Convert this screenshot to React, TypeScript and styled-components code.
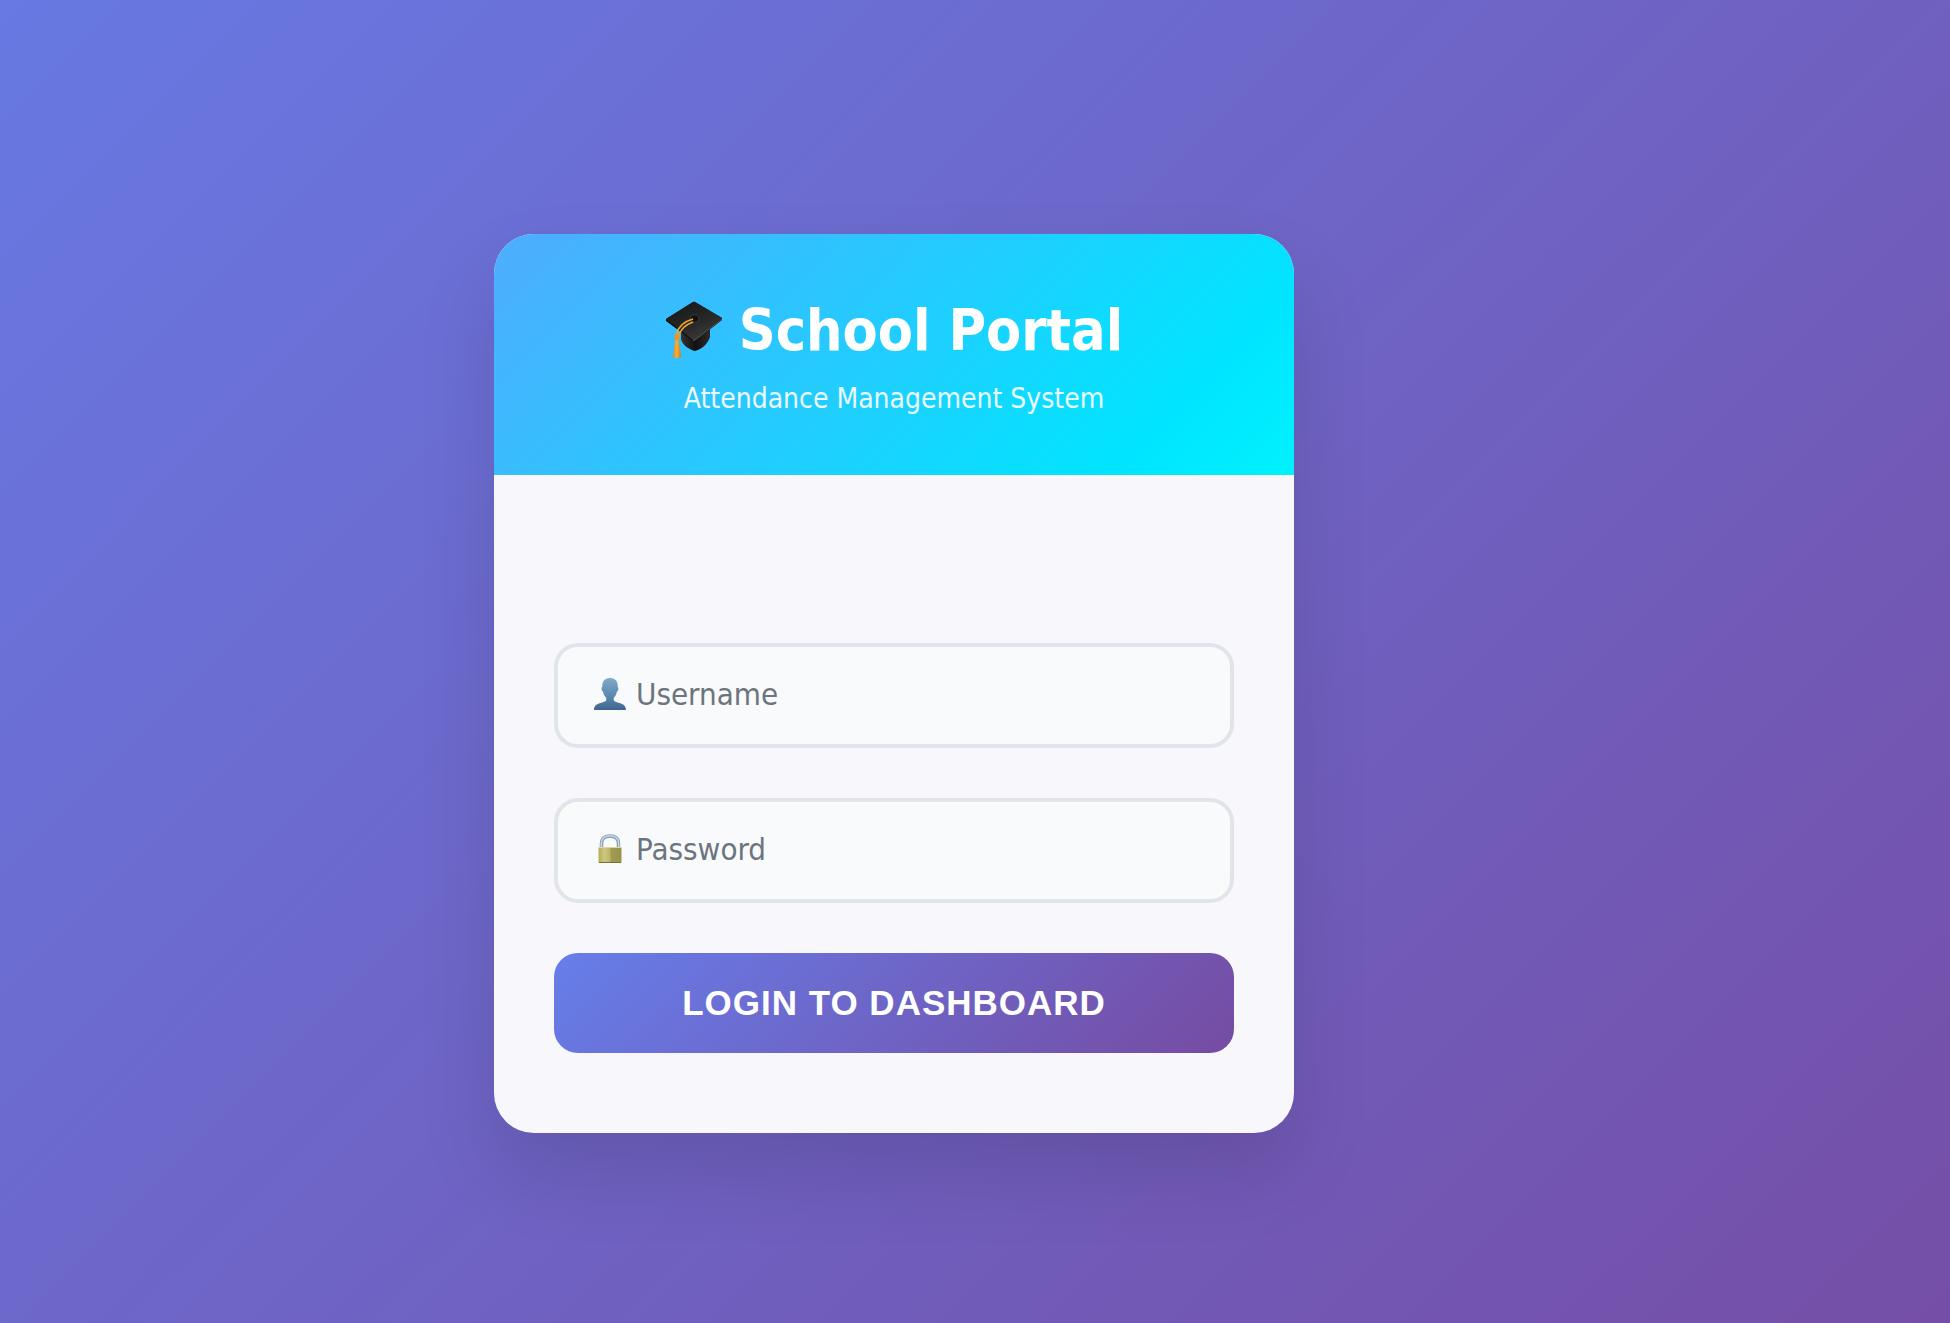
import React from "react";
import styled, { createGlobalStyle } from "styled-components";

const GlobalStyle = createGlobalStyle`
  * { box-sizing: border-box; }
  body {
    margin: 0;
    font-family: "DejaVu Sans Condensed", "DejaVu Sans", "Noto Sans", sans-serif;
  }
`;

const Page = styled.main`
  min-height: 100vh;
  padding: 44px 162px 0 0;
  display: flex;
  align-items: center;
  justify-content: center;
  background: linear-gradient(135deg, #667eea -12%, #764ba2 108%);
`;

const Card = styled.section`
  width: 100%;
  max-width: 800px;
  border-radius: 40px;
  overflow: hidden;
  background: #f8f8fc;
  box-shadow: 0 40px 80px rgba(0, 0, 0, 0.12);
`;

const Header = styled.header`
  padding: 60px 60px 58px;
  display: flex;
  flex-direction: column;
  align-items: center;
  gap: 14px;
  color: #fff;
  background: linear-gradient(135deg, #4facfe 0%, #00e5ff 83%, #00f2fe 100%);
`;

const Title = styled.h1`
  margin: 0;
  display: flex;
  align-items: center;
  gap: 16px;
  font-size: 57px;
  line-height: 73px;
  font-weight: 700;

  svg {
    margin-bottom: 4px;
  }
`;

const Subtitle = styled.p`
  margin: 0;
  font-size: 28px;
  line-height: 36px;
  opacity: 0.9;
`;

const Form = styled.form`
  padding: 168px 60px 80px;
  display: flex;
  flex-direction: column;
  gap: 50px;
`;

const Field = styled.label`
  height: 105px;
  padding: 0 35px 4px;
  display: flex;
  align-items: center;
  gap: 9px;
  border: 4px solid #e1e5e9;
  border-radius: 24px;
  background: #f8fafc;
`;

const Input = styled.input`
  flex: 1;
  min-width: 0;
  padding: 0;
  border: 0;
  outline: 0;
  background: transparent;
  color: #333;
  font-family: inherit;
  font-size: 31px;
  line-height: 40px;

  &::placeholder {
    color: #6c757d;
    opacity: 1;
  }
`;

const Submit = styled.button`
  height: 100px;
  border: 0;
  border-radius: 24px;
  color: #fff;
  background: linear-gradient(135deg, #667eea 0%, #764ba2 100%);
  font-family: "Liberation Sans", Arial, sans-serif;
  font-size: 35px;
  font-weight: 700;
  letter-spacing: 1px;
  text-transform: uppercase;
  cursor: pointer;
`;

const CapIcon = () => (
  <svg width="58" height="58" viewBox="0 0 58 58" aria-hidden="true">
    <defs>
      <linearGradient id="capTop" x1="0" y1="0" x2="0.6" y2="1">
        <stop offset="0" stopColor="#161616" />
        <stop offset="0.6" stopColor="#262626" />
        <stop offset="1" stopColor="#3a3a3a" />
      </linearGradient>
      <linearGradient id="capBase" x1="0" y1="0" x2="1" y2="0">
        <stop offset="0" stopColor="#333" />
        <stop offset="0.5" stopColor="#111" />
        <stop offset="1" stopColor="#2c2c2c" />
      </linearGradient>
      <linearGradient id="tassel" x1="0" y1="0" x2="1" y2="0">
        <stop offset="0" stopColor="#e08a1e" />
        <stop offset="0.5" stopColor="#f6b044" />
        <stop offset="1" stopColor="#c9781a" />
      </linearGradient>
    </defs>
    <path d="M16 30V39C17 45 25 50 30 51C38 49 43 43 45 37V28L30 40Z" fill="url(#capBase)" />
    <path d="M1 19L28 2Q29 1.500 30 2L57 18V20L30 41Q29 42 28 41L1 21Z" fill="#0c0c0c" />
    <path d="M1 19L28 2Q29 1.500 30 2L57 18L30 40Q29 41 28 40Z" fill="url(#capTop)" />
    <path d="M28 40Q29 41 30 40L57 19" fill="none" stroke="#5a5a5a" strokeWidth="1" />
    <ellipse cx="29.500" cy="18.500" rx="4.500" ry="3.800" fill="#111" stroke="#3c3c3c" />
    <path d="M28 19Q14 23 11.500 34M28 22Q17 26 14 35" fill="none" stroke="#efa52f" strokeWidth="1.600" />
    <path d="M10 34H14L15 38L13 41H11L9 38Z" fill="#e8982a" />
    <path d="M10 41Q12 39 14 41L16 57Q12 59 8 57Z" fill="url(#tassel)" />
  </svg>
);

const UserIcon = () => (
  <svg width="34" height="34" viewBox="0 0 34 34" aria-hidden="true">
    <defs>
      <linearGradient id="user" x1="0" y1="0" x2="0" y2="1">
        <stop offset="0" stopColor="#7faac9" />
        <stop offset="0.5" stopColor="#608cb3" />
        <stop offset="1" stopColor="#40658e" />
      </linearGradient>
    </defs>
    <path
      d="M17 1C11.500 1 9 4.500 9.300 10C8 10.500 8.400 14 10 14.500C10.500 17.500 12 19.500 13.300 20.800V22.500C13.300 27 1 24 1 33H33C33 24 20.700 27 20.700 22.500V20.800C22 19.500 23.500 17.500 24 14.500C25.600 14 26 10.500 24.700 10C25 4.500 22.500 1 17 1Z"
      fill="url(#user)"
    />
  </svg>
);

const LockIcon = () => (
  <svg width="34" height="34" viewBox="0 0 34 34" aria-hidden="true">
    <defs>
      <linearGradient id="lockBody" x1="0" y1="0" x2="1" y2="0">
        <stop offset="0" stopColor="#b5ad59" />
        <stop offset="0.25" stopColor="#cdc87b" />
        <stop offset="0.48" stopColor="#bcb76a" />
        <stop offset="0.55" stopColor="#a19c50" />
        <stop offset="1" stopColor="#99934a" />
      </linearGradient>
    </defs>
    <path d="M8.500 16V12Q8.500 4 17 4Q25.500 4 25.500 12V16" fill="none" stroke="#8b9db3" strokeWidth="3.500" />
    <path d="M8.300 16V12Q8.500 3.800 17 3.800Q25.500 3.800 25.700 12V16" fill="none" stroke="#c2d6ec" strokeWidth="1.500" />
    <rect x="5.500" y="15" width="23" height="16" rx="1" fill="url(#lockBody)" />
    <path d="M6 15.500H28" stroke="#ded999" />
    <path d="M6 30.500H28" stroke="#77713a" />
  </svg>
);

export default function App() {
  return (
    <>
      <GlobalStyle />
      <Page>
        <Card>
          <Header>
            <Title>
              <CapIcon />
              School Portal
            </Title>
            <Subtitle>Attendance Management System</Subtitle>
          </Header>
          <Form onSubmit={(event: React.FormEvent) => event.preventDefault()}>
            <Field htmlFor="username">
              <UserIcon />
              <Input id="username" type="text" aria-label="Username" placeholder="Username" />
            </Field>
            <Field htmlFor="password">
              <LockIcon />
              <Input id="password" type="password" aria-label="Password" placeholder="Password" />
            </Field>
            <Submit type="submit">Login to Dashboard</Submit>
          </Form>
        </Card>
      </Page>
    </>
  );
}
